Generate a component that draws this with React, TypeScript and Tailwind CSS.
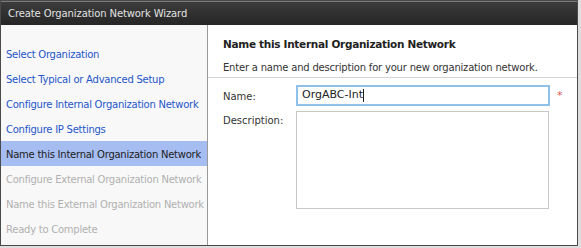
import React from "react";

const font = { fontFamily: '"DejaVu Sans", "Liberation Sans", sans-serif' };

type Step = { label: string; state: "done" | "active" | "todo" };

const steps: Step[] = [
  { label: "Select Organization", state: "done" },
  { label: "Select Typical or Advanced Setup", state: "done" },
  { label: "Configure Internal Organization Network", state: "done" },
  { label: "Configure IP Settings", state: "done" },
  { label: "Name this Internal Organization Network", state: "active" },
  { label: "Configure External Organization Network", state: "todo" },
  { label: "Name this External Organization Network", state: "todo" },
  { label: "Ready to Complete", state: "todo" },
];

export default function App() {
  return (
    <div className="w-[581px] h-[248px] bg-[#dedede]" style={font}>
      <div className="w-[578px] h-[246px] border border-[#4a4a4a] bg-white flex flex-col overflow-hidden">
        <div className="h-[24px] shrink-0 bg-gradient-to-b from-[#3c3c3c] to-[#262626] border-t border-[#7a7a7a] flex items-center pl-[7px] text-[10px] text-[#e2e2e2] tracking-[-0.1px]">
          Create Organization Network Wizard
        </div>
        <div className="flex flex-1 min-h-0">
          <div className="w-[207px] shrink-0 bg-[#f8f8f8] border-r border-[#9a9a9a] pt-[16px]">
            {steps.map((s) => (
              <div
                key={s.label}
                className={
                  "h-[25px] flex items-center pl-[5px] pt-[1px] text-[10px] tracking-[-0.25px] whitespace-nowrap " +
                  (s.state === "done"
                    ? "text-[#2456c8]"
                    : s.state === "active"
                    ? "bg-[#a6bdf2] text-[#1c1c1c]"
                    : "text-[#b0b0b0]")
                }
              >
                {s.label}
              </div>
            ))}
          </div>
          <div className="flex-1 flex flex-col">
            <div className="pl-[15px] pt-[12px] pb-[3px] border-b border-[#d4d4d4]">
              <div className="text-[10.5px] font-bold text-[#222] tracking-[-0.3px] leading-[14px]">
                Name this Internal Organization Network
              </div>
              <div className="mt-[10px] text-[10px] text-[#333] tracking-[-0.2px] leading-[13px] whitespace-nowrap">
                Enter a name and description for your new organization network.
              </div>
            </div>
            <div className="pl-[15px] pt-[7px] flex flex-col gap-[5px]">
              <div className="flex items-center">
                <div className="w-[73px] text-[10px] text-[#333] pt-[1px]">Name:</div>
                <div className="w-[254px] h-[21px] border-2 border-[#8fc0ea] bg-white flex items-center pl-[4px] text-[11px] text-[#222]">
                  OrgABC-Int<span className="inline-block w-px h-[13px] bg-[#222]" />
                </div>
                <div className="ml-[7px] text-[11px] text-[#e05a5a] leading-none">*</div>
              </div>
              <div className="flex items-start">
                <div className="w-[73px] text-[10px] text-[#333] pt-[2px]">Description:</div>
                <div className="w-[253px] h-[98px] border border-[#c8c8c8] bg-white" />
              </div>
            </div>
          </div>
        </div>
      </div>
    </div>
  );
}
